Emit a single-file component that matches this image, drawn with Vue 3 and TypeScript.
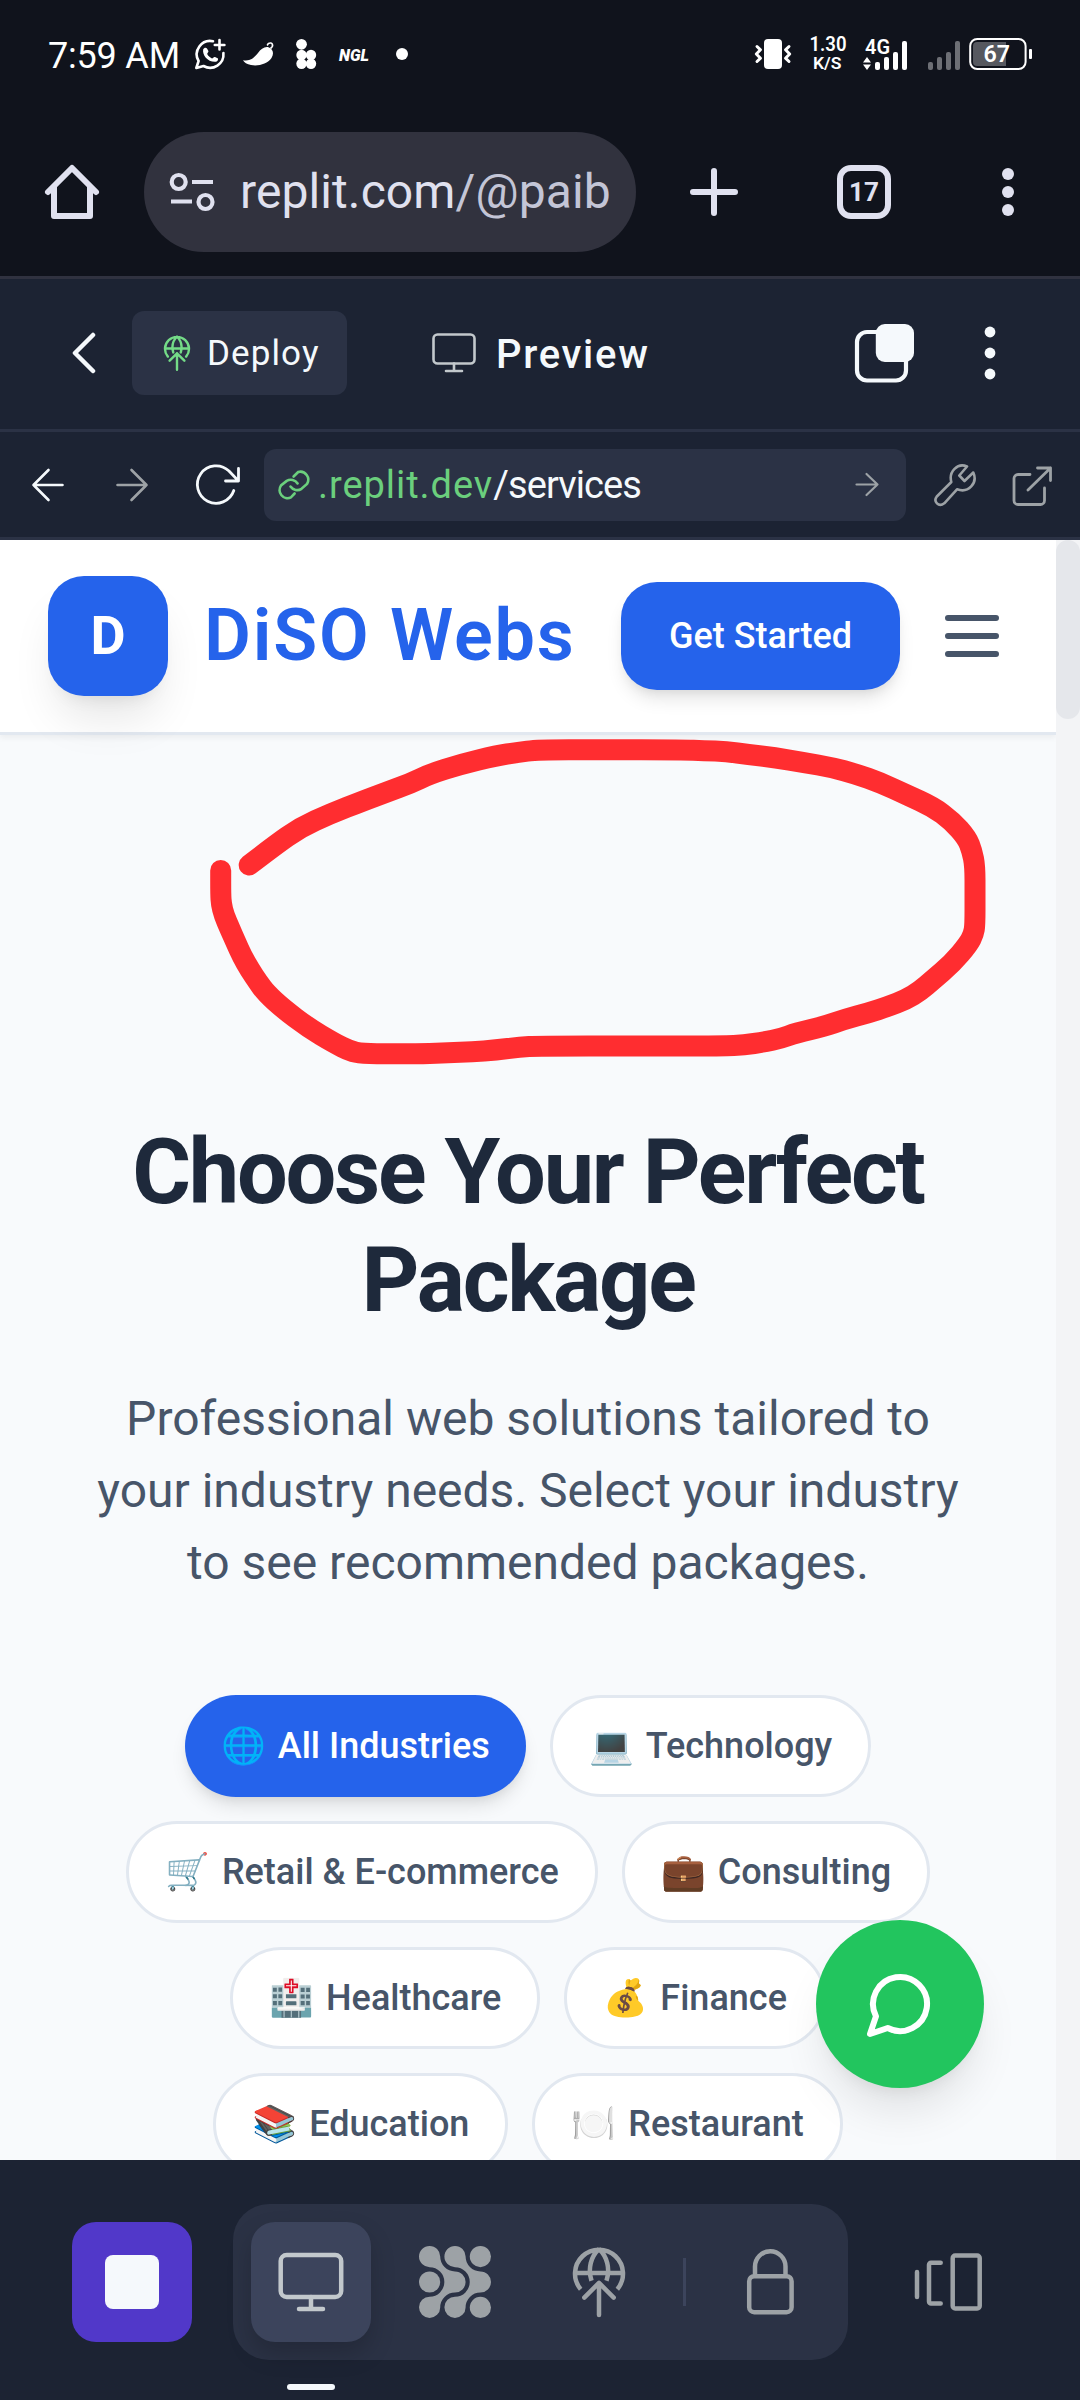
<script setup lang="ts">
interface Industry {
  emoji: string
  label: string
  active?: boolean
}

const industries: Industry[] = [
  { emoji: '🌐', label: 'All Industries', active: true },
  { emoji: '💻', label: 'Technology' },
  { emoji: '🛒', label: 'Retail & E-commerce' },
  { emoji: '💼', label: 'Consulting' },
  { emoji: '🏥', label: 'Healthcare' },
  { emoji: '💰', label: 'Finance' },
  { emoji: '📚', label: 'Education' },
  { emoji: '🍽️', label: 'Restaurant' },
]

// Sampled pen positions of the freehand markup
const pen: [number, number][] = [
  [249.2, 865], [274, 846], [300.5, 827.3], [330, 814], [363.7, 800.7], [387, 792], [410.4, 783.3],
  [430, 774], [460, 764.5], [497, 755.5], [517, 752.5], [537.9, 749.7], [600, 749.7], [682.5, 749.7],
  [704, 750.7], [726.4, 751.5], [748, 754.5], [774.6, 757.6], [804, 762.5], [832, 767.5], [856, 774],
  [880, 782.5], [907, 795], [932.7, 806.7], [952, 821], [967, 838], [972, 851], [975, 866], [975, 895],
  [975, 925], [973.5, 934], [968.5, 944], [952, 963.5], [932.7, 980], [920, 991], [906, 999.5],
  [888, 1006.5], [868.4, 1012.8], [844, 1019.5], [824, 1026.5], [796, 1033], [781, 1038.5], [764, 1042],
  [744, 1045], [723.7, 1046], [640, 1046], [537.9, 1046], [520, 1047], [496, 1050], [472, 1052],
  [448, 1052.7], [423.8, 1053.7], [392, 1053.7], [362, 1053.7], [350, 1051], [334, 1043], [308, 1027.5],
  [283, 1008.5], [266, 993], [258, 982], [250, 970], [242, 956], [235.5, 941.5], [230, 929],
  [224, 915], [221.3, 904], [220.7, 894], [220.7, 870.5],
]

const scribblePath = pen.reduce((d, [x, y], i) => {
  if (i === 0) return `M${x} ${y}`
  const next = pen[i + 1]
  return next ? `${d} Q${x} ${y} ${(x + next[0]) / 2} ${(y + next[1]) / 2}` : `${d} L${x} ${y}`
}, '')
</script>

<template>
  <div class="screen">
    <!-- Android status bar -->
    <div class="status">
      <span class="clock">7:59 AM</span>
      <svg class="st-left" width="220" height="40" viewBox="192 34 220 40" fill="none">
        <g stroke="#fff" stroke-width="2.6" stroke-linecap="round" stroke-linejoin="round">
          <path d="M213 41.2 A13.4 13.4 0 0 0 198.600 61 L196.300 68 L203.500 66 A13.400 13.400 0 0 0 223.400 53" />
          <path d="M219.500 40 V49.500 M214.800 45 H224.400" />
        </g>
        <path d="M203.200 49.200 C204 47.600 206 47 207 48.500 L208.400 51 C208.800 52 207.200 53 207.200 54 C208.200 56 209.800 57.400 212 58.400 C213 58.400 213.800 56.400 215 57 L217.600 58.200 C218.800 59 217.600 61.200 216 61.800 C208 62.600 202 55 203.200 49.200Z" fill="#fff" />
        <path d="M243 60.200 C251 61.500 254 57.500 258 53 C261 49 265 46 269 47.500 C273.500 49.500 274 54 271.500 58 C267.500 64 258 66.500 251 65 C247 64 244 62.500 243 60.200Z" fill="#fff" />
        <path d="M270.500 48.500 C274.500 45.500 272 41.500 268.500 43.500 C267.500 44.200 267.300 45 267.700 45.600" stroke="#fff" stroke-width="1.600" />
        <g fill="#fff">
          <circle cx="301.500" cy="44.300" r="5.400" />
          <circle cx="301.500" cy="55" r="5.200" />
          <circle cx="311" cy="55" r="5.200" />
          <circle cx="301.500" cy="63.800" r="5.200" />
          <circle cx="311" cy="63.800" r="5.200" />
          <circle cx="402" cy="54" r="6" />
        </g>
        <text x="339" y="60.500" class="ngl" textLength="30" lengthAdjust="spacingAndGlyphs">NGL</text>
      </svg>
      <svg class="st-right" width="284" height="60" viewBox="752 24 284 60" fill="none">
        <rect x="764" y="39" width="18" height="30" rx="4" fill="#fff" />
        <g stroke="#fff" stroke-width="3" stroke-linejoin="round" stroke-linecap="round">
          <path d="M757 46.500 L760.500 49.800 L756.300 54 L760.500 58.200 L757 61.500" />
          <path d="M789 46.500 L785.500 49.800 L789.700 54 L785.500 58.200 L789 61.500" />
        </g>
        <g class="st-text">
          <text x="809.500" y="51" font-size="20.500" textLength="37" lengthAdjust="spacingAndGlyphs">1.30</text>
          <text x="813" y="69" font-size="17" textLength="28.500" lengthAdjust="spacingAndGlyphs">K/S</text>
          <text x="865" y="53.500" font-size="21" textLength="25" lengthAdjust="spacingAndGlyphs">4G</text>
        </g>
        <path d="M863 62.500 L867 57 L871 62.500Z M863 64.500 L867 70 L871 64.500Z" fill="#fff" />
        <g fill="#fff">
          <rect x="875" y="62" width="5" height="8" rx="2" />
          <rect x="884" y="57" width="5" height="13" rx="2" />
          <rect x="893" y="52" width="5" height="18" rx="2" />
          <rect x="902" y="41" width="5" height="29" rx="2" />
        </g>
        <g fill="#6d6f75">
          <rect x="928" y="62" width="5" height="8" rx="2" />
          <rect x="937" y="57" width="5" height="13" rx="2" />
          <rect x="946" y="52" width="5" height="18" rx="2" />
          <rect x="955" y="41" width="5" height="29" rx="2" />
        </g>
        <rect x="970.200" y="39" width="55.400" height="30" rx="7" stroke="#fff" stroke-width="2" />
        <path d="M977 42 H1006 V66 H977 A4 4 0 0 1 973 62 V46 A4 4 0 0 1 977 42Z" fill="#56585f" />
        <rect x="1029" y="49" width="3" height="10" rx="1" fill="#fff" />
        <text x="983.500" y="62.300" class="st-text" font-size="23" textLength="26.500" lengthAdjust="spacingAndGlyphs">67</text>
      </svg>
    </div>

    <!-- Browser toolbar -->
    <div class="browser">
      <svg class="home" width="58" height="58" viewBox="43 163 58 58" fill="none" stroke="#e0e1ef" stroke-width="6" stroke-linecap="round" stroke-linejoin="round">
        <path d="M48 192 L72 168 L96 192 M54 187 V216 H90 V187" />
      </svg>
      <div class="omnibox">
        <svg width="48" height="42" viewBox="168 171 48 42" fill="none" stroke="#e0e1ef" stroke-width="4.200">
          <circle cx="178.700" cy="182" r="7" />
          <path d="M192 182 H213 M171 201.500 H192" />
          <circle cx="205.500" cy="202" r="7" />
        </svg>
        <span class="site-url">replit.com<span class="site-path">/@paib</span></span>
      </div>
      <svg class="plus" width="52" height="52" viewBox="688 166 52 52" stroke="#e0e1ef" stroke-width="6" stroke-linecap="round">
        <path d="M693 192 H735 M714 171 V213" />
      </svg>
      <div class="tabs">17</div>
      <svg class="kebab" width="16" height="52" viewBox="1000 166 16 52" fill="#e0e1ef">
        <circle cx="1008" cy="174" r="6" /><circle cx="1008" cy="192" r="6" /><circle cx="1008" cy="210" r="6" />
      </svg>
    </div>

    <!-- Workspace header -->
    <div class="workspace">
      <svg class="chevron" width="26" height="44" viewBox="70 331 26 44" fill="none" stroke="#f5f9fc" stroke-width="4.500" stroke-linecap="round" stroke-linejoin="round">
        <path d="M93 335 L75 353 L93 371" />
      </svg>
      <div class="deploy">
        <svg width="36" height="36" viewBox="0 0 24 24" fill="none" stroke="#74db87" stroke-width="1.600" stroke-linecap="round" stroke-linejoin="round">
          <path d="M5.900 14.400 A8 8 0 1 1 18.100 14.400 M4 9 H20 M12 1 C9.500 3.500 8.300 7.500 9.500 11.600 M12 1 C14.500 3.500 15.700 7.500 14.500 11.600 M12 12.200 V23.200 M7.100 17.100 L12 12.200 L16.900 17.100" />
        </svg>
        <span>Deploy</span>
      </div>
      <svg class="mon" width="46" height="42" viewBox="431 332 46 42" fill="none" stroke="#c2c8cc" stroke-width="2.600" stroke-linecap="round" stroke-linejoin="round">
        <rect x="433.500" y="334.500" width="41" height="29" rx="4" />
        <path d="M454 363.500 V371 M446 371 H462" />
      </svg>
      <span class="ws-title">Preview</span>
      <svg class="pip" width="62" height="62" viewBox="853 321 62 62" fill="none">
        <rect x="857" y="331" width="49" height="48.500" rx="10" stroke="#f5f9fc" stroke-width="4.200" />
        <rect x="875.800" y="323" width="38.200" height="38" rx="9" fill="#f5f9fc" />
      </svg>
      <svg class="dots" width="14" height="56" viewBox="983 325 14 56" fill="#f5f9fc">
        <circle cx="990" cy="332" r="5.400" /><circle cx="990" cy="353" r="5.400" /><circle cx="990" cy="374" r="5.400" />
      </svg>
    </div>

    <!-- Preview address row -->
    <div class="address">
      <svg class="nav-back" width="36" height="36" viewBox="30 467 36 36" fill="none" stroke="#f5f9fc" stroke-width="2.600" stroke-linecap="round" stroke-linejoin="round">
        <path d="M62.500 485 H33.500 M48.500 470 L33.500 485 L48.500 500" />
      </svg>
      <svg class="nav-fwd" width="36" height="36" viewBox="114 467 36 36" fill="none" stroke="#9da2a6" stroke-width="2.600" stroke-linecap="round" stroke-linejoin="round">
        <path d="M117.500 485 H146.500 M131.500 470 L146.500 485 L131.500 500" />
      </svg>
      <svg class="reload" width="48" height="44" viewBox="194 463 48 44" fill="none" stroke="#f5f9fc" stroke-width="2.800" stroke-linecap="round" stroke-linejoin="round">
        <path d="M233.800 490.500 A18.700 18.700 0 1 1 229 471 L238.500 481 M238.500 468.500 V481 H225.500" />
      </svg>
      <div class="urlbox">
        <svg width="36" height="36" viewBox="276 467 36 36" fill="none" stroke="#6bcf7d" stroke-width="2.600" stroke-linecap="round">
          <path d="M293.600 476.500 L298.200 472 A8 8 0 0 1 307 484 L301.500 488.800 A8 8 0 0 1 290.500 486.500" />
          <path d="M294.600 493.500 L291 497.300 A8 8 0 0 1 281 485.500 L286.700 480.900 A8 8 0 0 1 297.600 483.500" />
        </svg>
        <span class="host">.replit.dev</span><span class="route">/services</span>
        <svg class="go" width="26" height="26" viewBox="854.500 472.500 26 26" fill="none" stroke="#9da2a6" stroke-width="2.200" stroke-linecap="round" stroke-linejoin="round">
          <path d="M857 485 H878 M867 474.500 L878 485 L867 495.500" />
        </svg>
      </div>
      <svg class="wrench" width="46" height="46" viewBox="932 461 46 46" fill="none" stroke="#9da2a6" stroke-width="2.600" stroke-linejoin="round" stroke-linecap="round">
        <path d="M967 465.500 C957.500 461.500 948.500 470.500 951.300 481 L936.800 495.500 C933 500.500 938.500 506.500 944.300 502.300 L957 488.300 C968.500 492.500 978 482 973.300 471.500 L964.500 480 L959.300 474.500 Z" />
      </svg>
      <svg class="external" width="44" height="46" viewBox="1010 461 44 46" fill="none" stroke="#9da2a6" stroke-width="2.800" stroke-linejoin="round" stroke-linecap="round">
        <path d="M1030 473.500 H1018 A4 4 0 0 0 1014 477.500 V499.500 A4 4 0 0 0 1018 503.500 H1040.500 A4 4 0 0 0 1044.500 499.500 V487 M1028 489 L1050.500 467 M1037.500 467 H1050.500 V479.500" />
      </svg>
    </div>

    <!-- Previewed site -->
    <div class="preview">
      <div class="page">
        <header class="site-header">
          <div class="logo">D</div>
          <span class="brand">DiSO Webs</span>
          <button class="cta">Get Started</button>
          <svg class="burger" width="72" height="72" viewBox="0 0 24 24" stroke="#475569" stroke-width="2" stroke-linecap="round">
            <path d="M4 6 H20 M4 12 H20 M4 18 H20" />
          </svg>
        </header>
        <main class="hero">
          <h1>Choose Your Perfect Package</h1>
          <p>Professional web solutions tailored to your industry needs. Select your industry to see recommended packages.</p>
          <div class="pills">
            <button v-for="item in industries" :key="item.label" class="pill" :class="{ active: item.active }">
              <span class="emoji">{{ item.emoji }}</span>{{ item.label }}
            </button>
          </div>
        </main>
        <svg class="scribble" width="800" height="340" viewBox="200 730 800 340" fill="none" stroke="#ff2d30" stroke-width="21" stroke-linecap="round" stroke-linejoin="round">
          <path :d="scribblePath" />
        </svg>
        <button class="fab">
          <svg width="72" height="72" viewBox="0 0 24 24" fill="none" stroke="#fff" stroke-width="2" stroke-linecap="round" stroke-linejoin="round">
            <path d="M7.900 20 A9 9 0 1 0 4 16.100 L2 22 Z" />
          </svg>
        </button>
      </div>
      <div class="scrollbar"><div class="thumb"></div></div>
    </div>

    <!-- Workspace bottom dock -->
    <div class="dock">
      <div class="stop"><div class="stop-square"></div></div>
      <div class="group">
        <div class="tile selected">
          <svg width="72" height="72" viewBox="275 2246 72 72" fill="none" stroke="#c2c8cc" stroke-width="4.500" stroke-linecap="round" stroke-linejoin="round">
            <rect x="280.700" y="2255" width="60.500" height="42" rx="6" />
            <path d="M311 2297 V2309 M299 2309 H323" />
          </svg>
        </div>
        <div class="tile">
          <svg width="72" height="72" viewBox="0 0 72 72" fill="#9da2a6">
            <path id="weave" d="M21.200 10.600 A14.800 14.800 0 0 0 36 25.400 A10.600 10.600 0 0 1 36 46.600 A14.800 14.800 0 0 0 21.200 61.400 A10.600 10.600 0 1 1 10.600 50.700 A14.750 14.750 0 0 0 10.600 21.200 A10.600 10.600 0 1 1 21.200 10.600Z" />
            <use href="#weave" x="25.400" />
            <circle cx="61.400" cy="10.600" r="10.600" />
            <circle cx="10.600" cy="36" r="10.600" />
            <circle cx="61.400" cy="61.400" r="10.600" />
          </svg>
        </div>
        <div class="tile">
          <svg width="72" height="72" viewBox="0 0 24 24" fill="none" stroke="#9da2a6" stroke-width="1.500" stroke-linejoin="round">
            <path d="M5.900 14.400 A8 8 0 1 1 18.100 14.400 M4 9 H20 M12 1 C9.300 3.500 8.200 7.500 9.500 11.600 M12 1 C14.700 3.500 15.800 7.500 14.500 11.600" />
            <path d="M12 12.300 V23 M7.100 17.200 L12 12.300 L16.900 17.200" stroke-linecap="round" />
          </svg>
        </div>
        <div class="divider"></div>
        <div class="tile">
          <svg width="72" height="72" viewBox="734 2246 72 72" fill="none" stroke="#9da2a6" stroke-width="4.500" stroke-linejoin="round">
            <rect x="749.200" y="2276.200" width="42.400" height="36" rx="5" />
            <path d="M755 2276 V2266.500 A15.200 15.200 0 0 1 785.500 2266.500 V2276" />
          </svg>
        </div>
      </div>
      <div class="tile">
        <svg width="72" height="72" viewBox="912 2246 72 72" fill="none" stroke="#9da2a6" stroke-width="4.500" stroke-linecap="round" stroke-linejoin="round">
          <path d="M917 2272 V2297 M940.700 2262.700 H931 A2 2 0 0 0 929 2264.700 V2301.500 A2 2 0 0 0 931 2303.500 H940.700" />
          <rect x="952.700" y="2255.500" width="27" height="53" rx="2.500" />
        </svg>
      </div>
      <div class="indicator"></div>
    </div>
  </div>
</template>

<style>
body {
  background: #10131c;
}
</style>

<style scoped>
.screen {
  width: 1080px;
  height: 2400px;
  overflow: hidden;
  display: flex;
  flex-direction: column;
  font-family: Roboto, "Liberation Sans", sans-serif;
  background: #10131c;
}
.screen * {
  box-sizing: border-box;
}
svg {
  display: block;
  flex: none;
}
button {
  border: 0;
  font-family: inherit;
}

.status {
  height: 108px;
  flex: none;
  display: flex;
  align-items: center;
  color: #fff;
}
.clock {
  margin-left: 48px;
  width: 132px;
  padding-top: 3px;
  font-size: 36px;
  line-height: 42px;
  letter-spacing: -0.2px;
  white-space: nowrap;
}
.st-left {
  margin-left: 12px;
}
.st-right {
  margin-left: 340px;
}
.st-text {
  fill: #fff;
  font-family: Roboto, sans-serif;
  font-weight: 600;
}
.ngl {
  fill: #fff;
  font-family: Roboto, sans-serif;
  font-size: 17px;
  font-weight: 900;
  font-style: italic;
}

.browser {
  height: 171px;
  flex: none;
  display: flex;
  align-items: center;
  border-bottom: 3px solid #303240;
}
.home {
  margin-left: 43px;
}
.omnibox {
  margin-left: 43px;
  width: 492px;
  height: 120px;
  border-radius: 60px;
  background: #31323e;
  display: flex;
  align-items: center;
  padding-left: 24px;
}
.site-url {
  margin-left: 24px;
  font-size: 48px;
  line-height: 60px;
  letter-spacing: 0.1px;
  color: #e0e1ef;
  white-space: nowrap;
}
.site-path {
  color: #c3c5d6;
}
.plus {
  margin-left: 52px;
}
.tabs {
  margin-left: 97px;
  width: 54px;
  height: 54px;
  border: 6px solid #e0e1ef;
  border-radius: 14px;
  color: #e0e1ef;
  font-size: 26px;
  font-weight: 700;
  line-height: 43px;
  text-align: center;
}
.kebab {
  margin-left: 109px;
}

.workspace {
  height: 153px;
  flex: none;
  display: flex;
  align-items: center;
  background: #1c2333;
  border-bottom: 3px solid #2b3245;
  color: #f5f9fc;
  padding-bottom: 2px;
}
.chevron {
  margin-left: 70px;
}
.deploy {
  margin-left: 36px;
  width: 215px;
  height: 84px;
  border-radius: 12px;
  background: #2b3245;
  display: flex;
  align-items: center;
  padding-left: 27px;
  font-size: 35px;
  letter-spacing: 1.1px;
}
.deploy span {
  margin-left: 12px;
}
.mon {
  margin-left: 84px;
}
.ws-title {
  margin-left: 19px;
  width: 170px;
  padding-top: 2px;
  font-size: 40px;
  font-weight: 500;
  letter-spacing: 1.7px;
}
.pip {
  margin-left: 187px;
}
.dots {
  margin-left: 68px;
}

.address {
  height: 108px;
  flex: none;
  display: flex;
  align-items: center;
  background: #1c2333;
  border-bottom: 3px solid #2b3245;
}
.nav-back {
  margin-left: 30px;
}
.nav-fwd {
  margin-left: 48px;
}
.reload {
  margin-left: 44px;
}
.urlbox {
  margin-left: 22px;
  width: 642px;
  height: 72px;
  border-radius: 12px;
  background: #2b3245;
  display: flex;
  align-items: center;
  padding: 0 26px 0 12px;
  font-size: 38px;
}
.host {
  margin-left: 6px;
  letter-spacing: 0.95px;
  color: #6bcf7d;
}
.route {
  letter-spacing: -0.9px;
  color: #f5f9fc;
}
.go {
  margin-left: auto;
}
.wrench {
  margin-left: 26px;
}
.external {
  margin-left: 32px;
}

.preview {
  height: 1620px;
  flex: none;
  display: flex;
  overflow: hidden;
}
.page {
  position: relative;
  width: 1056px;
  height: 1620px;
  overflow: hidden;
  background: #f8fafc;
}
.scrollbar {
  width: 24px;
  background: #f3f4f6;
}
.thumb {
  height: 179px;
  border-radius: 12px;
  background: #e5e7eb;
}
.site-header {
  height: 195px;
  display: flex;
  align-items: center;
  padding-left: 48px;
  background: #fff;
  border-bottom: 3px solid #e2e8f0;
  box-shadow: 0 3px 6px rgba(0, 0, 0, 0.05);
}
.logo {
  width: 120px;
  height: 120px;
  border-radius: 36px;
  background: #2563eb;
  color: #fff;
  font-size: 54px;
  font-weight: 700;
  line-height: 120px;
  text-align: center;
  box-shadow: 0 30px 45px -9px rgba(0, 0, 0, 0.1), 0 12px 18px -12px rgba(0, 0, 0, 0.1);
}
.brand {
  margin-left: 36px;
  width: 417px;
  font-size: 72px;
  line-height: 84px;
  padding-bottom: 1px;
  font-weight: 600;
  letter-spacing: 1.8px;
  color: #2563eb;
  white-space: nowrap;
}
.cta {
  width: 279px;
  height: 108px;
  padding: 0;
  border-radius: 36px;
  background: #2563eb;
  color: #fff;
  font-size: 36px;
  font-weight: 500;
  box-shadow: 0 12px 18px -3px rgba(0, 0, 0, 0.1), 0 6px 12px -6px rgba(0, 0, 0, 0.1);
}
.burger {
  margin-left: 36px;
}
.hero {
  padding: 384px 96px 0;
  text-align: center;
}
h1 {
  margin: 0;
  font-size: 90px;
  line-height: 108px;
  font-weight: 700;
  letter-spacing: -2.25px;
  color: #1e293b;
}
p {
  margin: 48px 0 96px;
  font-size: 48px;
  line-height: 72px;
  color: #475569;
}
.pills {
  display: flex;
  flex-wrap: wrap;
  justify-content: center;
  gap: 24px;
}
.pill {
  height: 102px;
  padding: 0 36px;
  border: 3px solid #e2e8f0;
  border-radius: 51px;
  background: #fff;
  color: #475569;
  font-size: 36px;
  font-weight: 500;
  white-space: nowrap;
}
.pill.active {
  background: #2563eb;
  border: 0;
  color: #fff;
  box-shadow: 0 12px 18px -3px rgba(0, 0, 0, 0.1), 0 6px 12px -6px rgba(0, 0, 0, 0.1);
}
.emoji {
  margin-right: 12px;
}
.scribble {
  position: absolute;
  left: 200px;
  top: 190px;
}
.fab {
  position: absolute;
  right: 72px;
  bottom: 72px;
  width: 168px;
  height: 168px;
  border-radius: 50%;
  background: #22c55e;
  padding: 48px;
  box-shadow: 0 30px 45px -9px rgba(0, 0, 0, 0.1), 0 12px 18px -12px rgba(0, 0, 0, 0.1);
}

.dock {
  position: relative;
  height: 240px;
  flex: none;
  display: flex;
  justify-content: space-between;
  align-items: flex-start;
  padding: 44px 72px 0;
  background: #1c2333;
}
.stop,
.dock > .tile {
  margin-top: 18px;
}
.stop {
  width: 120px;
  height: 120px;
  border-radius: 24px;
  background: #5138c9;
  display: flex;
  align-items: center;
  justify-content: center;
}
.stop-square {
  width: 54px;
  height: 54px;
  border-radius: 8px;
  background: #f5f9fc;
}
.group {
  height: 156px;
  padding: 0 18px;
  border-radius: 36px;
  background: #2b3245;
  display: flex;
  align-items: center;
  gap: 24px;
}
.tile {
  width: 120px;
  height: 120px;
  border-radius: 24px;
  display: flex;
  align-items: center;
  justify-content: center;
}
.selected {
  background: #3c445c;
  box-shadow: 0 12px 24px rgba(2, 2, 3, 0.18);
}
.divider {
  width: 3px;
  height: 48px;
  background: #3c445c;
}
.indicator {
  position: absolute;
  left: 287px;
  bottom: 10px;
  width: 48px;
  height: 6px;
  border-radius: 3px;
  background: #f5f9fc;
}
</style>
